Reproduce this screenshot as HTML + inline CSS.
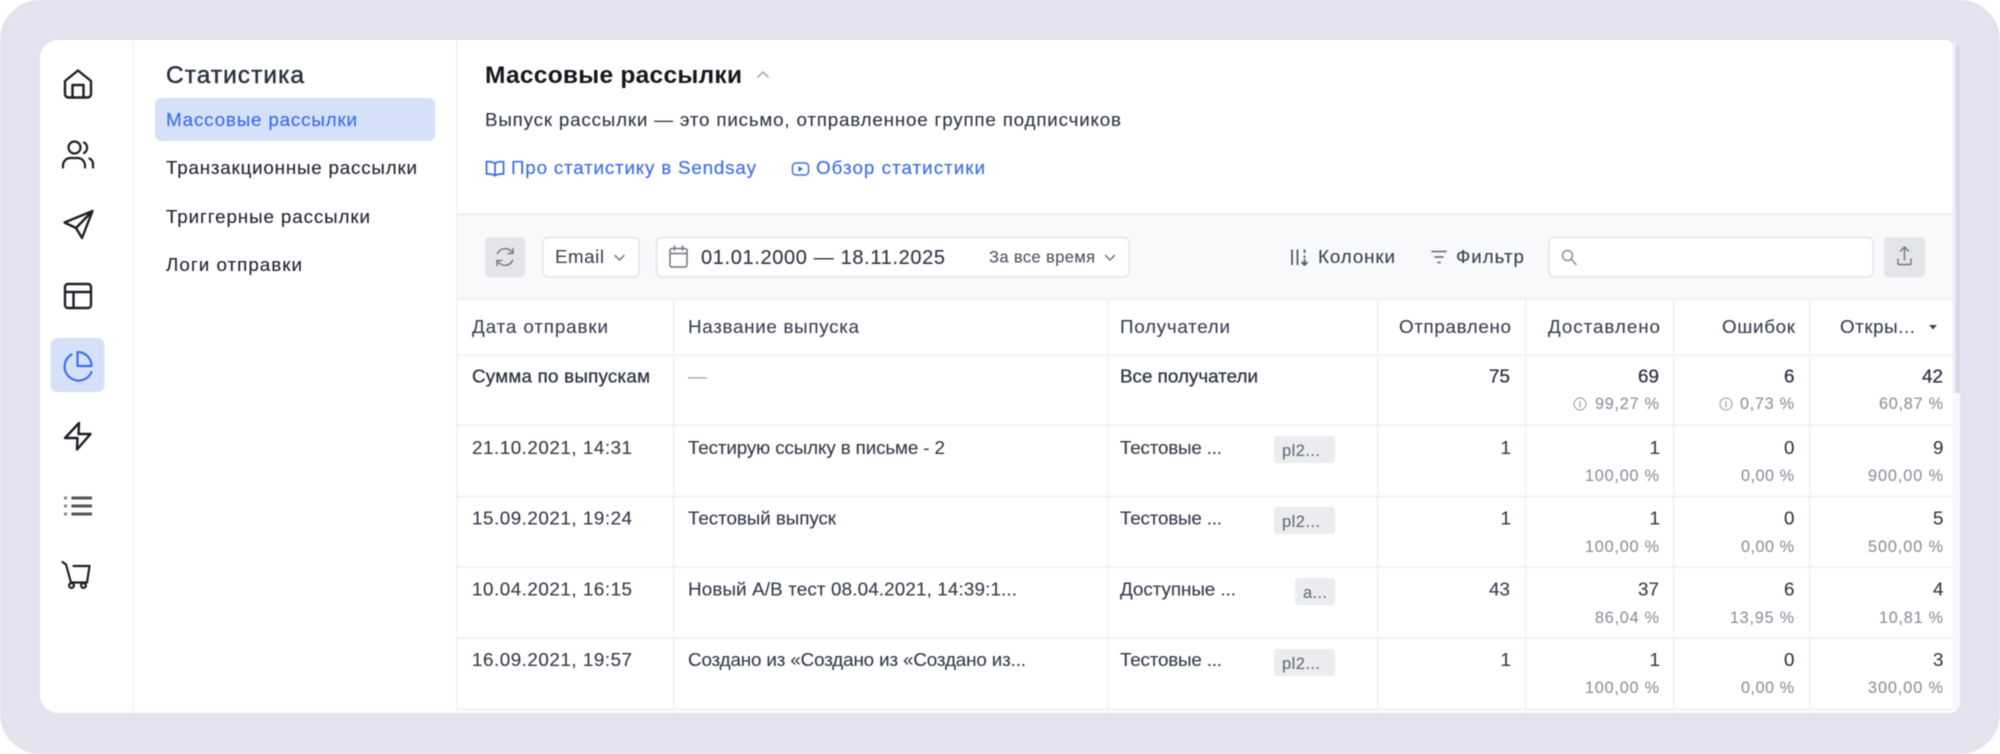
<!DOCTYPE html>
<html lang="ru"><head><meta charset="utf-8"><title>Статистика</title>
<style>
html,body{margin:0;padding:0;background:#fff;width:2000px;height:754px;overflow:hidden}
svg{display:block;filter:blur(.5px)}
text{font-family:"Liberation Sans","DejaVu Sans",sans-serif;font-size:18.800px;fill:#343a48;white-space:pre;stroke:#343a48;stroke-width:.12px}
.m{stroke-width:.28px;fill:#2d3340;stroke:#2d3340}
.d{fill:#20242e;stroke:#20242e}
.s{font-size:16.200px;fill:#8b8f9b;stroke:#8b8f9b;stroke-width:.08px}
.l{fill:#3f70ee;stroke:#3f70ee;stroke-width:.2px}
.i{fill:none;stroke:#1d1f24;stroke-width:2.400;stroke-linecap:round;stroke-linejoin:round}
.g{fill:none;stroke:#6f7480;stroke-width:1.7;stroke-linecap:round;stroke-linejoin:round}
.b{fill:none;stroke:#3f70ee;stroke-width:1.800;stroke-linecap:round;stroke-linejoin:round}
.ln{fill:#f1f1f6}
.tag{fill:#ebecef}
.tt{font-size:16.500px;fill:#636874;stroke:#636874;stroke-width:.08px}
</style></head><body>
<svg width="2000" height="754" viewBox="0 0 2000 754" xmlns="http://www.w3.org/2000/svg">
<defs><clipPath id="c"><path d="M58 40H1950a10 10 0 0 1 10 10V703a10 10 0 0 1-10 10H58a18 18 0 0 1-18-18V58a18 18 0 0 1 18-18Z"/></clipPath></defs>
<rect width="2000" height="754" rx="40" fill="#e3e3ef"/>
<g clip-path="url(#c)">
<rect x="40" y="40" width="1920" height="673" fill="#fff"/>
<rect x="132.500" y="40" width="1.500" height="673" fill="#f0f0f6"/>
<rect x="456" y="40" width="1.500" height="673" fill="#f0f0f6"/>
<!-- toolbar -->
<rect x="457" y="214" width="1496" height="85" fill="#f8f9fb"/>
<rect x="457" y="213.500" width="1496" height="1.500" fill="#e9eaef"/>
<rect x="457" y="298.500" width="1496" height="1.500" fill="#eff0f4"/>
<!-- table lines -->
<g class="ln">
<rect x="673" y="300" width="1.500" height="413"/><rect x="1107" y="300" width="1.500" height="413"/>
<rect x="1377" y="300" width="1.500" height="413"/><rect x="1525" y="300" width="1.500" height="413"/>
<rect x="1673" y="300" width="1.500" height="413"/><rect x="1809" y="300" width="1.500" height="413"/>
<rect x="457" y="354.500" width="1496" height="1.500"/><rect x="457" y="424.500" width="1496" height="1.500"/>
<rect x="457" y="495.500" width="1496" height="2"/><rect x="457" y="566.500" width="1496" height="1.500"/>
<rect x="457" y="637" width="1496" height="2"/><rect x="457" y="708.500" width="1496" height="2"/>
</g>
<!-- scrollbar -->
<rect x="1952.500" y="40" width="7.500" height="673" fill="#e3e3ef"/>
<rect x="1952.500" y="393" width="7.500" height="320" fill="#f8f8fb"/>
<path d="M1952.500 40h3v353h-3Z" fill="#eeeef4"/>
<path d="M1955.500 46h4.500v347h-4.500Z" fill="#d6d8e2"/>
</g>
<path d="M1946 40a6.500 6.500 0 0 1 6.500 6.500V40Z" fill="#e3e3ef"/>

<!-- nav rail icons -->
<path class="i" d="M65 81 78 70.500 91 81V94a3.500 3.500 0 0 1-3.500 3.500h-19A3.500 3.500 0 0 1 65 94ZM72.500 97.500V85h11V97.500"/>
<path class="i" style="stroke-width:2.200" d="M68.500 147.500a6 6 0 1 0 12 0 6 6 0 1 0-12 0ZM84 142.500a6 6 0 0 1 0 10.500M63 167.500v-2a7.500 7.500 0 0 1 7.500-7.500h7a7.500 7.500 0 0 1 7.500 7.500v2M89.500 158.500a6.500 6.500 0 0 1 3.500 6v3"/>
<path class="i" d="M92.500 211 64.500 222.500 76 228 82 238ZM92.500 211 76 228"/>
<path class="i" d="M65 287a3 3 0 0 1 3-3H88a3 3 0 0 1 3 3V305a3 3 0 0 1-3 3H68a3 3 0 0 1-3-3ZM65 292H91M73.500 292V308"/>
<rect x="50.500" y="338" width="54" height="54" rx="7" fill="#d6e1f9"/>
<path class="i" style="stroke:#3f70ee;stroke-width:2.200" d="M77.500 352a14 14 0 0 1 14 14H77.500ZM71.500 354.500a14 14 0 1 0 20 17.500"/>
<path class="i" d="M79 423 78.500 434H90.500L77 449.500 77.500 438H65Z"/>
<path d="M64 498h3M64 506h3M64 514h3" stroke="#888" stroke-width="3" fill="none"/>
<path d="M71.500 498H92M71.500 506H92M71.500 514H92" stroke="#555" stroke-width="3" fill="none"/>
<path class="i" style="stroke-width:2.200" d="M62.500 562 66 564.500 71 582.500H87L89.500 566H73.500"/>
<circle cx="71.500" cy="585.500" r="2.400" class="i" style="stroke-width:2.200"/><circle cx="83.500" cy="585.500" r="2.400" class="i" style="stroke-width:2.200"/>

<!-- submenu -->
<text x="166" y="83" style="font-size:24.500px;fill:#2a3040;stroke:#2a3040;stroke-width:.45px" textLength="138">Статистика</text>
<rect x="155" y="98" width="280" height="43" rx="6" fill="#d6e1f9"/>
<text x="166" y="126" class="l" textLength="191">Массовые рассылки</text>
<text x="166" y="174" class="d" textLength="251">Транзакционные рассылки</text>
<text x="166" y="223" class="d" textLength="204">Триггерные рассылки</text>
<text x="166" y="271" class="d" textLength="136">Логи отправки</text>

<!-- header -->
<text x="485" y="83" style="font-size:24.500px;font-weight:700;fill:#15171c;stroke:none" textLength="257">Массовые рассылки</text>
<path d="M758 77l5-5 5 5" fill="none" stroke="#a6a9b2" stroke-width="1.600" stroke-linecap="round" stroke-linejoin="round"/>
<text x="485" y="126" style="fill:#2f3542" textLength="636">Выпуск рассылки — это письмо, отправленное группе подписчиков</text>
<path class="b" d="M495 163.500c-2-1.700-5-2-8.500-1.800V174c3.500-.2 6.500.1 8.500 1.800 2-1.700 5-2 8.500-1.800V161.700c-3.500-.2-6.500.1-8.500 1.800ZM495 163.500V175.800"/>
<text x="511" y="174" class="l" textLength="245">Про статистику в Sendsay</text>
<rect x="792.500" y="163" width="16" height="12" rx="3.500" class="b" style="stroke-width:1.500"/><path d="M798.500 166v6l4.500-3Z" fill="#3f70ee"/>
<text x="816" y="174" class="l" textLength="169">Обзор статистики</text>

<!-- toolbar controls -->
<rect x="485" y="237" width="40" height="40" rx="4" fill="#e4e5e8"/>
<path class="g" d="M497.500 253.500a8.500 8.500 0 0 1 13.500-2.500l2 2M513 248.500v5h-5M512.500 260.500a8.500 8.500 0 0 1-13.500 2.500l-2-2M497 265.500v-5h5" style="stroke-width:1.500;stroke:#777b85"/>
<rect x="543" y="237.500" width="96" height="39.500" rx="5" fill="#fff" stroke="#e3e4ea" stroke-width="1.500"/>
<text x="555" y="263" style="fill:#414756;stroke:#414756" textLength="49">Email</text>
<path class="g" d="M615 255.500l4.500 4.500 4.500-4.500" style="stroke-width:1.500"/>
<rect x="656.500" y="237.500" width="472.500" height="39.500" rx="5" fill="#fff" stroke="#e3e4ea" stroke-width="1.500"/>
<path class="g" style="stroke-width:1.500" d="M670 250.500a2 2 0 0 1 2-2h13a2 2 0 0 1 2 2V265a2 2 0 0 1-2 2h-13a2 2 0 0 1-2-2ZM670 253.500H687M674.500 246V250M682.500 246V250"/>
<text x="701" y="264" style="font-size:20px;fill:#2f3542;stroke:#2f3542" textLength="244">01.01.2000 — 18.11.2025</text>
<text x="989" y="262.500" style="font-size:16.500px;fill:#4b5160;stroke:#4b5160;stroke-width:.08px" textLength="106">За все время</text>
<path class="g" d="M1105.500 255.500l4.500 4.500 4.500-4.500" style="stroke-width:1.500"/>
<path class="g" style="stroke-width:1.800;stroke:#555a66;stroke-linecap:butt" d="M1292 249.500V265M1297.500 249.500V265M1304.500 249.500V253M1304.500 255.500V258M1304.500 259V264M1301.500 262l3 3 3-3"/>
<text x="1318" y="263" style="fill:#3a404e;stroke:#3a404e" textLength="77">Колонки</text>
<path class="g" style="stroke-width:1.700" d="M1432 251.500H1446M1435 257H1443M1438 262.500H1440"/>
<text x="1456" y="263" style="fill:#3a404e;stroke:#3a404e" textLength="68">Фильтр</text>
<rect x="1549" y="237.500" width="324" height="39.500" rx="5" fill="#fff" stroke="#e3e4ea" stroke-width="1.500"/>
<circle cx="1567.500" cy="255.500" r="5" class="g" style="stroke-width:1.500;stroke:#8a8e99"/><path class="g" d="M1571.500 259.500l4.500 5" style="stroke-width:1.600;stroke:#8a8e99"/>
<rect x="1884" y="237" width="41" height="40" rx="4" fill="#e4e5e8"/>
<path class="g" style="stroke-width:1.400" d="M1904.500 247V260M1900.500 251l4-4 4 4M1898 259v4.500a1 1 0 0 0 1 1h11a1 1 0 0 0 1-1V259"/>

<!-- table header -->
<text x="472" y="333" style="fill:#3a404e;stroke:#3a404e" textLength="136">Дата отправки</text>
<text x="688" y="333" style="fill:#3a404e;stroke:#3a404e" textLength="171">Название выпуска</text>
<text x="1120" y="333" style="fill:#3a404e;stroke:#3a404e" textLength="110">Получатели</text>
<text x="1399" y="333" style="fill:#3a404e;stroke:#3a404e" textLength="112">Отправлено</text>
<text x="1548" y="333" style="fill:#3a404e;stroke:#3a404e" textLength="112">Доставлено</text>
<text x="1722" y="333" style="fill:#3a404e;stroke:#3a404e" textLength="73">Ошибок</text>
<text x="1840" y="333" style="fill:#3a404e;stroke:#3a404e" textLength="75">Откры...</text>
<path d="M1929 325h8l-4 4.500Z" fill="#3a404e"/>

<!-- sum row -->
<text x="472" y="382.500" class="m" textLength="178">Сумма по выпускам</text>
<text x="688" y="382.500" style="fill:#a0a3ad;stroke:none" textLength="18">—</text>
<text x="1120" y="382.500" class="m" textLength="138">Все получатели</text>
<text x="1489" y="382.500" class="m" textLength="21">75</text>
<text x="1638" y="382.500" class="m" textLength="21">69</text>
<text x="1784" y="382.500" class="m" textLength="10">6</text>
<text x="1922" y="382.500" class="m" textLength="21">42</text>
<circle cx="1580" cy="404" r="6" fill="none" stroke="#a5a8b2" stroke-width="1.200"/><path d="M1580 401v6.500" stroke="#a5a8b2" stroke-width="1.300"/>
<circle cx="1726" cy="404" r="6" fill="none" stroke="#a5a8b2" stroke-width="1.200"/><path d="M1726 401v6.500" stroke="#a5a8b2" stroke-width="1.300"/>
<text x="1595" y="409" class="s" textLength="64">99,27 %</text>
<text x="1740" y="409" class="s" textLength="54">0,73 %</text>
<text x="1879" y="409" class="s" textLength="64">60,87 %</text>

<!-- row 1 -->
<text x="472" y="454" textLength="160">21.10.2021, 14:31</text>
<text x="688" y="454" textLength="257">Тестирую ссылку в письме - 2</text>
<text x="1120" y="454" textLength="102">Тестовые ...</text>
<rect class="tag" x="1274" y="436" width="61" height="27" rx="3"/><text class="tt" x="1282" y="456" textLength="38">pl2...</text>
<text x="1500.500" y="454">1</text><text x="1649.500" y="454">1</text><text x="1784" y="454">0</text><text x="1933" y="454">9</text>
<text x="1585" y="481" class="s" textLength="74">100,00 %</text><text x="1741" y="481" class="s" textLength="53">0,00 %</text><text x="1868" y="481" class="s" textLength="75">900,00 %</text>

<!-- row 2 -->
<text x="472" y="524.500" textLength="160">15.09.2021, 19:24</text>
<text x="688" y="524.500" textLength="148">Тестовый выпуск</text>
<text x="1120" y="524.500" textLength="102">Тестовые ...</text>
<rect class="tag" x="1274" y="507" width="61" height="27" rx="3"/><text class="tt" x="1282" y="527" textLength="38">pl2...</text>
<text x="1500.500" y="524.500">1</text><text x="1649.500" y="524.500">1</text><text x="1784" y="524.500">0</text><text x="1933" y="524.500">5</text>
<text x="1585" y="552" class="s" textLength="74">100,00 %</text><text x="1741" y="552" class="s" textLength="53">0,00 %</text><text x="1868" y="552" class="s" textLength="75">500,00 %</text>

<!-- row 3 -->
<text x="472" y="595.500" textLength="160">10.04.2021, 16:15</text>
<text x="688" y="595.500" textLength="329">Новый А/В тест 08.04.2021, 14:39:1...</text>
<text x="1120" y="595.500" textLength="116">Доступные ...</text>
<rect class="tag" x="1295" y="578" width="40" height="27" rx="3"/><text class="tt" x="1303" y="598" textLength="24">a...</text>
<text x="1489" y="595.500" textLength="21">43</text><text x="1638" y="595.500" textLength="21">37</text><text x="1784" y="595.500">6</text><text x="1933" y="595.500">4</text>
<text x="1595" y="623" class="s" textLength="64">86,04 %</text><text x="1730" y="623" class="s" textLength="64">13,95 %</text><text x="1879" y="623" class="s" textLength="64">10,81 %</text>

<!-- row 4 -->
<text x="472" y="666" textLength="160">16.09.2021, 19:57</text>
<text x="688" y="666" textLength="338">Создано из «Создано из «Создано из...</text>
<text x="1120" y="666" textLength="102">Тестовые ...</text>
<rect class="tag" x="1274" y="649" width="61" height="27" rx="3"/><text class="tt" x="1282" y="669" textLength="38">pl2...</text>
<text x="1500.500" y="666">1</text><text x="1649.500" y="666">1</text><text x="1784" y="666">0</text><text x="1933" y="666">3</text>
<text x="1585" y="693" class="s" textLength="74">100,00 %</text><text x="1741" y="693" class="s" textLength="53">0,00 %</text><text x="1868" y="693" class="s" textLength="75">300,00 %</text>
</svg>
</body></html>
